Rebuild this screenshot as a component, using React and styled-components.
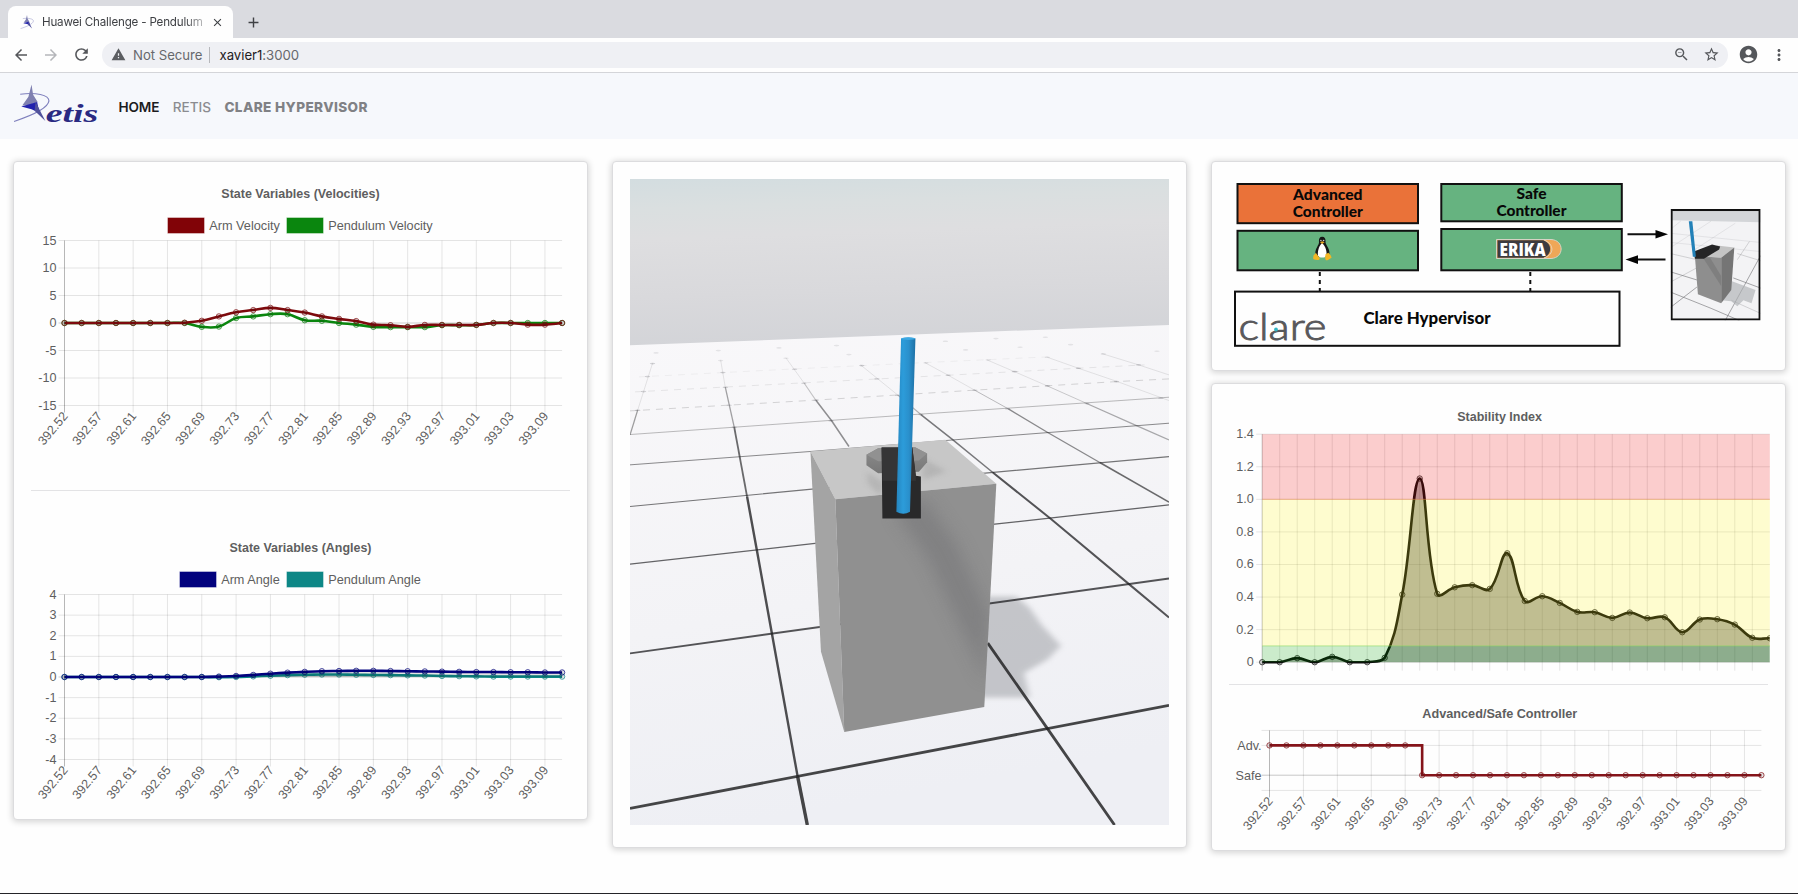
import React from "react";
import styled, { createGlobalStyle } from "styled-components";
import {
  MdArrowBack,
  MdArrowForward,
  MdRefresh,
  MdWarning,
  MdStarBorder,
  MdAccountCircle,
  MdMoreVert,
  MdOutlineZoomOut,
  MdClose,
  MdAdd,
} from "react-icons/md";

const GlobalStyle = createGlobalStyle`
  * { box-sizing: border-box; }
  html, body { margin: 0; padding: 0; background: #fefefe; }
  body { font-family: Inter, Roboto, sans-serif; overflow: hidden; }
  svg { display: block; }
`;

/* ---------- browser window ---------- */

const Window = styled.div`
  width: 1798px;
  height: 894px;
  display: flex;
  flex-direction: column;
  border-bottom: 1px solid #242428;
`;

const TabStrip = styled.div`
  height: 38px;
  flex: none;
  display: flex;
  align-items: flex-end;
  padding-left: 8px;
  background: #dadbe0;
`;

const Tab = styled.div`
  width: 225px;
  height: 32px;
  display: flex;
  align-items: center;
  padding: 0 9px 0 12px;
  border-radius: 8px 8px 0 0;
  background: #fefefe;
`;

const TabTitle = styled.div`
  flex: 1;
  margin-left: 8px;
  white-space: nowrap;
  font-size: 11.6px;
  letter-spacing: -0.18px;
  color: #3d3f43;
  mask-image: linear-gradient(90deg, #000 84%, rgba(0, 0, 0, 0.3) 96%);
`;

const TabClose = styled.div`
  color: #3f4145;
`;

const NewTab = styled.div`
  height: 32px;
  display: flex;
  align-items: center;
  margin-left: 12px;
  color: #3f4145;
`;

const Toolbar = styled.div`
  height: 35px;
  flex: none;
  display: flex;
  align-items: center;
  padding: 0 10px 1px 12px;
  background: #fefefe;
  border-bottom: 1px solid #d4d5d9;
`;

const ToolIcon = styled.div`
  width: ${(p) => p.$w || 30}px;
  display: flex;
  justify-content: ${(p) => p.$align || "flex-start"};
  color: ${(p) => p.$color || "#55575b"};
`;

const AddressBar = styled.div`
  flex: 1;
  height: 26px;
  display: flex;
  align-items: center;
  padding: 0 8px 0 9px;
  border-radius: 13px;
  background: #eff0f4;
  font-size: 13.2px;
  color: #66686c;
  letter-spacing: -0.03px;
`;

const Secure = styled.span`
  margin-left: 7px;
  padding-right: 7px;
  border-right: 1px solid #b6b7bb;
  line-height: 16px;
`;

const Url = styled.span`
  flex: 1;
  margin-left: 9px;
  b { font-weight: 400; color: #1f2023; }
`;

/* ---------- page ---------- */

const Navbar = styled.nav`
  height: 66px;
  flex: none;
  display: flex;
  align-items: center;
  padding: 1px 0 0 12px;
  background: #f6f8fc;
`;

const NavLink = styled.a`
  margin-left: ${(p) => p.$gap}px;
  font-size: 13.6px;
  font-weight: ${(p) => p.$weight};
  letter-spacing: ${(p) => p.$tracking || 0}px;
  color: ${(p) => p.$color};
`;

const Board = styled.main`
  display: grid;
  grid-template-columns: repeat(3, 575px);
  gap: 24px;
  align-items: start;
  padding: 22px 0 0 13px;
`;

const Column = styled.div`
  display: flex;
  flex-direction: column;
  gap: 12px;
`;

const Card = styled.section`
  padding: 17px 17px ${(p) => p.$bottom || 16}px;
  border: 1px solid #dcdcde;
  border-radius: 4px;
  background: #fefefe;
  box-shadow: 0 1px 6px 1px rgba(0, 0, 0, 0.16);
`;

const Rule = styled.hr`
  height: 1px;
  border: 0;
  margin: ${(p) => p.$margin || "0"};
  background: #e3e3e5;
`;

const ChartSvg = styled.svg`
  overflow: visible;
  font-family: "Liberation Sans", Arial, sans-serif;
  font-size: 12.6px;
  fill: #5e5e60;
`;

/* ---------- charts ---------- */

const TIMES = [
  "392.52", "392.57", "392.61", "392.65", "392.69", "392.73", "392.77", "392.81",
  "392.85", "392.89", "392.93", "392.97", "393.01", "393.03", "393.09",
];
const COUNT = 30;

function curve(pts, lo, hi) {
  const t = 0.4;
  const cap = (v) => Math.max(lo, Math.min(hi, v));
  const ctrl = pts.map((p, i) => {
    const a = pts[i - 1] || p;
    const c = pts[i + 1] || p;
    const d01 = Math.hypot(p[0] - a[0], p[1] - a[1]);
    const d12 = Math.hypot(c[0] - p[0], c[1] - p[1]);
    const s = d01 + d12 || 1;
    const fa = (t * d01) / s;
    const fb = (t * d12) / s;
    return {
      prev: [p[0] - fa * (c[0] - a[0]), cap(p[1] - fa * (c[1] - a[1]))],
      next: [p[0] + fb * (c[0] - a[0]), cap(p[1] + fb * (c[1] - a[1]))],
    };
  });
  let d = `M${pts[0][0]},${pts[0][1]}`;
  for (let i = 1; i < pts.length; i++) {
    d += `C${ctrl[i - 1].next} ${ctrl[i].prev} ${pts[i]}`;
  }
  return d;
}

function XLabels({ left, step, bottom }) {
  return TIMES.map((t, i) => {
    const x = left + step * i * 2;
    return (
      <text key={t} textAnchor="end" transform={`translate(${x + 4},${bottom + 11}) rotate(-50)`}>
        {t}
      </text>
    );
  });
}

function Title({ x, y, width, children }) {
  return (
    <text x={x} y={y} textAnchor="middle" fontWeight="bold" textLength={width} lengthAdjust="spacingAndGlyphs">
      {children}
    </text>
  );
}

function Series({ values, color, x, y, lo, hi, fill }) {
  const pts = values.map((v, i) => [x(i), y(v)]);
  const d = curve(pts, lo, hi);
  const zero = y(0);
  return (
    <g>
      {fill && <path d={`${d}L${pts[pts.length - 1][0]},${zero}L${pts[0][0]},${zero}Z`} fill={fill} />}
      <path d={d} fill="none" stroke={color} strokeWidth="2.6" strokeLinejoin="round" />
      {pts.map((p, i) => (
        <circle key={i} cx={p[0]} cy={p[1]} r="2.7" fill="rgba(0,0,0,.1)" stroke={color} strokeOpacity=".7" strokeWidth="1" />
      ))}
    </g>
  );
}

function StateChart({ title, titleWidth, legend, ticks, series }) {
  const left = 33.5, right = 531.1, top = 61.5, bottom = 226.5;
  const step = (right - left) / (COUNT - 1);
  const max = ticks[0];
  const x = (i) => left + i * step;
  const y = (v) => top + ((max - v) / (2 * max)) * (bottom - top);
  return (
    <ChartSvg width="539" height="270">
      <Title x={269.5} y={19.4} width={titleWidth}>{title}</Title>
      {legend.map((l) => (
        <g key={l.label}>
          <rect x={l.x} y="39" width="36" height="15" fill={l.color} stroke={l.color} strokeOpacity=".6" />
          <text x={l.x + 41.2} y="50.6" textLength={l.width} lengthAdjust="spacingAndGlyphs">{l.label}</text>
        </g>
      ))}
      {ticks.map((t) => (
        <g key={t}>
          <line x1={left - 6} x2={right} y1={y(t)} y2={y(t)} stroke="#000" strokeOpacity={t === 0 ? 0.2 : 0.1} />
          <text x={left - 8} y={y(t) + 4} textAnchor="end">{t}</text>
        </g>
      ))}
      {TIMES.map((t, i) => (
        <line key={t} x1={x(i * 2)} x2={x(i * 2)} y1={top} y2={bottom + 7} stroke="#000" strokeOpacity={i ? 0.1 : 0.28} />
      ))}
      <XLabels left={left} step={step} bottom={bottom} />
      {series.map((s) => (
        <Series key={s.color} {...s} x={x} y={y} lo={top} hi={bottom} />
      ))}
    </ChartSvg>
  );
}

const STABILITY = [
  0, 0, 0.025, 0, 0.033, 0, 0, 0.027, 0.415, 1.128, 0.42, 0.46, 0.473, 0.45, 0.669, 0.376, 0.405, 0.364,
  0.309, 0.307, 0.272, 0.305, 0.27, 0.276, 0.184, 0.262, 0.264, 0.231, 0.15, 0.147,
];

function StabilityChart() {
  const left = 33.2, right = 540.8, top = 33.2, bottom = 261.2;
  const step = (right - left) / (COUNT - 1);
  const x = (i) => left + i * step;
  const y = (v) => bottom - (v / 1.4) * (bottom - top);
  const ticks = ["1.4", "1.2", "1.0", "0.8", "0.6", "0.4", "0.2", "0"];
  return (
    <ChartSvg width="539" height="283">
      <clipPath id="stability-area"><rect x="29" y="0" width={right - 29} height="283" /></clipPath>
      <Title x={270.6} y={20.4} width={84.7}>Stability Index</Title>
      {ticks.map((t) => (
        <g key={t}>
          <line x1={left - 6} x2={right} y1={y(+t)} y2={y(+t)} stroke="#000" strokeOpacity=".1" />
          <text x={left - 8.4} y={y(+t) + 4} textAnchor="end">{t}</text>
        </g>
      ))}
      {STABILITY.slice(0, 29).map((_, i) => (
        <line key={i} x1={x(i)} x2={x(i)} y1={top} y2={bottom + 8.5} stroke="#000" strokeOpacity={i ? 0.1 : 0.25} />
      ))}
      <g clipPath="url(#stability-area)">
        <Series values={STABILITY} color="#0c0c0c" fill="rgba(0,0,0,.3)" x={x} y={y} lo={top} hi={bottom} />
      </g>
      <rect x={left} y={top} width={right - left} height={y(1) - top} fill="rgba(238,10,10,.2)" />
      <rect x={left} y={y(1)} width={right - left} height={y(0.1) - y(1)} fill="rgba(255,245,20,.2)" />
      <rect x={left} y={y(0.1)} width={right - left} height={bottom - y(0.1)} fill="rgba(0,160,0,.2)" />
      <line x1={left} x2={right} y1={y(1)} y2={y(1)} stroke="#f08a50" strokeOpacity=".5" />
      <line x1={left} x2={right} y1={y(0.1)} y2={y(0.1)} stroke="#86dc5a" strokeOpacity=".55" />
    </ChartSvg>
  );
}

function ModeChart() {
  const left = 40.5, right = 532.4, top = 45.4, bottom = 105.4;
  const adv = 60.4, safe = 90.2;
  const step = (right - left) / (COUNT - 1);
  const x = (i) => left + i * step;
  return (
    <ChartSvg width="539" height="148">
      <Title x={270.8} y={33} width={155}>Advanced/Safe Controller</Title>
      {[top, adv, safe, bottom].map((v) => (
        <line key={v} x1={left - 8} x2={right} y1={v} y2={v} stroke="#000" strokeOpacity={v === safe ? 0.22 : 0.1} />
      ))}
      {TIMES.map((t, i) => (
        <line key={t} x1={x(i * 2)} x2={x(i * 2)} y1={top} y2={bottom + 7} stroke="#000" strokeOpacity={i ? 0.1 : 0.28} />
      ))}
      <text x={left - 8} y={adv + 4.2} textAnchor="end">Adv.</text>
      <text x={left - 8} y={safe + 4.5} textAnchor="end">Safe</text>
      <XLabels left={left} step={step} bottom={bottom} />
      <path d={`M${left},${adv}H${x(9)}V${safe}H${right}`} fill="none" stroke="#85141a" strokeWidth="2.6" />
      {STABILITY.map((_, i) => (
        <circle key={i} cx={x(i)} cy={i < 9 ? adv : safe} r="2.7" fill="rgba(0,0,0,.1)" stroke="#85141a" strokeOpacity=".75" />
      ))}
    </ChartSvg>
  );
}

/* ---------- simulation view ---------- */

const SceneSvg = styled.svg`
  width: 539px;
  height: 646px;
  path, polyline { vector-effect: non-scaling-stroke; }
`;

const ROWS = [
  ["77,1976 1463,1667", 2.8, 0.82],
  ["77,1511 1463,1286", 1.9, 0.75],
  ["77,1243 553,1181 1015,1123 1463,1065", 1.3, 0.68],
  ["77,1070 545,1018 990,970 1463,920", 1.2, 0.6],
  ["77,945 540,905 910,870 1463,820", 1, 0.5],
  ["77,854 345,832 770,797 1463,742", 0.9, 0.32],
];
const FADED_ROWS = [
  ["77,783 550,751 960,721 1330,695 1463,687", 0.17],
  ["90,726 520,699 895,676 1230,655 1400,645", 0.09],
  ["100,681 500,657 835,638 1150,621", 0.05],
];
const DEPTH = [
  ["322,712 345,832", 1.3, 0.4],
  ["345,832 378,1040", 1.8, 0.65],
  ["378,1040 403,1200 442,1452 508,1880", 2.4, 0.78],
  ["508,1880 533,2026", 3.4, 0.82],
  ["97,780 77,855", 1.3, 0.42],
  ["525,700 555,751", 1.1, 0.25],
  ["555,751 595,812 640,890", 1.5, 0.48],
  ["765,735 825,794", 1.1, 0.32],
  ["825,794 905,868 1010,968", 1.5, 0.58],
  ["1010,968 1158,1106 1357,1300 1463,1403", 2, 0.75],
  ["962,720 1050,777", 1, 0.28],
  ["1050,777 1150,847 1285,938", 1.3, 0.5],
  ["1285,938 1463,1057", 1.6, 0.65],
  ["1150,708 1250,760", 1, 0.22],
  ["1250,760 1375,825 1463,870", 1.2, 0.36],
  ["997,1480 1150,1736 1323,2026", 2.8, 0.82],
];
const FADED_DEPTH = [
  "135,640 97,780", "310,630 322,712", "478,624 525,700", "670,645 765,735",
  "835,638 895,676 962,720", "995,630 1065,665 1150,708", "1150,622 1230,655 1330,695 1463,752", "1290,611 1385,645 1463,675",
];
const DOTS = [
  [144, 609], [304, 602], [460, 594], [608, 587], [888, 574], [1018, 566], [1145, 562], [135, 641], [310, 632],
  [478, 625], [640, 614], [940, 600], [1080, 592], [1210, 584], [122, 680], [316, 668], [500, 658], [673, 647],
  [838, 639], [998, 630], [1150, 622], [1294, 612], [1432, 604], [112, 725], [322, 712], [524, 700], [712, 687],
  [895, 676], [1066, 665], [1230, 655], [1385, 645], [97, 781], [332, 766], [555, 751], [765, 736], [964, 721],
  [1150, 708], [1328, 695], [345, 832], [594, 813], [825, 794], [1048, 777], [1252, 761], [1442, 745],
];

function Scene() {
  return (
    <SceneSvg viewBox="77 87 1386 1939" preserveAspectRatio="none">
      <defs>
        <linearGradient id="sky" x1="0" y1="0" x2="0.12" y2="1">
          <stop offset="0" stopColor="#d3dde0" />
          <stop offset="0.18" stopColor="#dadfe0" />
          <stop offset="0.36" stopColor="#dedee0" />
          <stop offset="0.7" stopColor="#d9d9dc" />
          <stop offset="1" stopColor="#d3d4d8" />
        </linearGradient>
        <linearGradient id="floor" x1="0" y1="0" x2="0.2" y2="1">
          <stop offset="0" stopColor="#f9f8fa" />
          <stop offset="0.6" stopColor="#f3f3f6" />
          <stop offset="1" stopColor="#eeeff4" />
        </linearGradient>
        <linearGradient id="rod" x1="0" y1="0" x2="1" y2="0">
          <stop offset="0" stopColor="#2585bf" />
          <stop offset="0.35" stopColor="#2c9cda" />
          <stop offset="0.65" stopColor="#2a90cc" />
          <stop offset="1" stopColor="#1e70a5" />
        </linearGradient>
        <linearGradient id="hub" x1="0" y1="0" x2="0" y2="1">
          <stop offset="0" stopColor="#8c8c8c" />
          <stop offset="1" stopColor="#777" />
        </linearGradient>
        <filter id="soft" x="-20%" y="-20%" width="140%" height="140%"><feGaussianBlur stdDeviation="8" /></filter>
        <filter id="softer" x="-30%" y="-30%" width="160%" height="160%"><feGaussianBlur stdDeviation="22" /></filter>
        <clipPath id="front"><path d="M605,1048 1019,1002 988,1672 628,1747Z" /></clipPath>
        <clipPath id="top"><path d="M541,905 888,870 1019,1002 605,1048Z" /></clipPath>
      </defs>
      <path d="M77,87H1463V530L77,590Z" fill="url(#sky)" />
      <path d="M77,586 1463,525V2026H77Z" fill="url(#floor)" />
      <path d="M960,1340H1070L1105,1375 1135,1425 1185,1488 1150,1530 1090,1570 1105,1643H970Z" fill="#9fa1a6" opacity=".55" filter="url(#soft)" />
      <g fill="none" stroke="#1e1e20">
        {ROWS.map(([p, w, o]) => <polyline key={p} points={p} strokeWidth={w} strokeOpacity={o} />)}
        {FADED_ROWS.map(([p, o]) => <polyline key={p} points={p} strokeOpacity={o} strokeDasharray="7 6" />)}
        {DEPTH.map(([p, w, o]) => <polyline key={p} points={p} strokeWidth={w} strokeOpacity={o} />)}
        {FADED_DEPTH.map((p) => <polyline key={p} points={p} strokeOpacity=".1" />)}
      </g>
      {DOTS.map(([a, b]) => <ellipse key={`${a}-${b}`} cx={a} cy={b} rx="7" ry="2.5" fill="#55555a" opacity={b < 640 ? 0.12 : 0.24} />)}
      <path d="M541,905 888,870 1019,1002 605,1048Z" fill="#c7c7c7" />
      <path d="M541,905 605,1048 628,1747 568,1505Z" fill="#a4a4a4" />
      <path d="M605,1048 1019,1002 988,1672 628,1747Z" fill="#909090" />
      <g clipPath="url(#front)">
        <path d="M760,1090 830,1040 915,1180 1000,1390 995,1600 930,1440 840,1220Z" fill="#757577" opacity=".55" filter="url(#softer)" />
      </g>
      <g clipPath="url(#top)">
        <path d="M830,925 890,965 830,990ZM685,965 730,1000 722,1040 690,1000Z" fill="#a2a2a2" opacity=".5" filter="url(#soft)" />
      </g>
      <path d="M685,915 715,895 810,892 841,911V937L820,966 715,970 685,946Z" fill="url(#hub)" />
      <path d="M685,915 715,895 810,892 841,911 820,932 715,934Z" fill="#919191" />
      <path d="M724,893H803L812,978 825,980V1106H726Z" fill="#29292a" />
      <path d="M724,893H803L812,978 812,993H726Z" fill="#353536" />
      <path d="M774,566Q792,559 811,566L797,1086Q780,1098 762,1086Z" fill="url(#rod)" />
      <ellipse cx="792.5" cy="566" rx="18.5" ry="4" fill="#3da9e3" />
    </SceneSvg>
  );
}

/* ---------- architecture diagram ---------- */

const DiagramSvg = styled.svg`
  overflow: visible;
  font-family: Lato, sans-serif;
  font-size: 15.8px;
  font-weight: 900;
`;

function Diagram() {
  return (
    <DiagramSvg width="539" height="175">
      <g stroke="#111" strokeWidth="2">
        <rect x="8.5" y="5" width="180.5" height="39.2" fill="#ea7239" />
        <rect x="212.3" y="5" width="180.5" height="37.3" fill="#66b380" />
        <rect x="8.5" y="51.8" width="180.5" height="39.5" fill="#66b380" />
        <rect x="212.3" y="50" width="180.5" height="41.3" fill="#66b380" />
        <rect x="6" y="112.6" width="384.5" height="54.2" fill="#fefefe" />
        <path d="M90.8,93V112M301.3,93V112" strokeDasharray="4 4" />
        <path d="M398.5,55.3H430M406,80.6H436.5" />
      </g>
      <path d="M439,55.3 426.5,51V59.6ZM396.5,80.6 409,76.3V84.9Z" fill="#050505" />
      <g textAnchor="middle" fill="#080808">
        <text x="98.8" y="21.4" textLength="69.5" lengthAdjust="spacingAndGlyphs">Advanced</text>
        <text x="98.8" y="37.6" textLength="70" lengthAdjust="spacingAndGlyphs">Controller</text>
        <text x="302.5" y="20.4" textLength="30" lengthAdjust="spacingAndGlyphs">Safe</text>
        <text x="302.5" y="36.5" textLength="70" lengthAdjust="spacingAndGlyphs">Controller</text>
        <text x="198" y="145" fontSize="17.4" textLength="127" lengthAdjust="spacingAndGlyphs">Clare Hypervisor</text>
      </g>
      {/* penguin */}
      <g transform="translate(84,57.7)">
        <path d="M9.2,0C6.3,0 5.7,2.3 6,5.5C6,8.2 2.4,11.5 2.3,16.5L3,20H16L16.4,16.5C16.8,12 12.6,8 12.5,5.5C12.8,2.3 12,0 9.2,0Z" fill="#161616" />
        <path d="M9,6.5C6.3,8.5 4.3,14 5,19C6.5,21.5 12,21.5 13.4,19C14.2,14 12,8.5 9,6.5Z" fill="#fff" />
        <circle cx="7.9" cy="3.8" r=".8" fill="#ccc" /><circle cx="10.6" cy="3.8" r=".8" fill="#ccc" />
        <path d="M7,5.6 9.2,4.5 11.6,5.6 9.2,7.3Z" fill="#e8a722" />
        <path d="M2.8,16 6.8,21.5C6.4,24.2 3,23.5 .6,22.5C-.4,21.5 .5,20 .6,18.5C1,17.5 2,18 2.8,16ZM15.4,16 17.8,18.8 18.6,21 14.5,23.5C12.2,24.2 11.8,22 12.5,17.5Z" fill="#f2b624" />
      </g>
      {/* ERIKA badge */}
      <path d="M267.5,60.5H322C335.5,61 335.5,79 322,79.5H267.5Z" fill="#efa757" stroke="#d6d3c5" />
      <path d="M268.5,61.3H314C323.5,64 323.5,76.2 314,78.8H268.5Z" fill="#3c3b3f" />
      <path d="M315,61C325.5,65 325.5,75.5 315,79" fill="none" stroke="#e8e0d0" strokeWidth=".8" />
      <text x="270.6" y="76.6" fontFamily="'Open Sans', sans-serif" fontSize="18" fontWeight="800" fill="#fff" textLength="46" lengthAdjust="spacingAndGlyphs">ERIKA</text>
      {/* hypervisor wordmark */}
      <text x="9.5" y="161" fontSize="38" fontWeight="300" fill="#58585b" stroke="#58585b" strokeWidth=".9" textLength="88" lengthAdjust="spacingAndGlyphs">clare</text>
      <circle cx="47" cy="150.5" r="1.9" fill="#35b5c4" />
      {/* plant thumbnail */}
      <svg x="441.6" y="30" width="90" height="111.5" viewBox="0 0 89 110" preserveAspectRatio="none">
        <rect width="89" height="110" fill="#f3f3f5" />
        <path d="M0,0H89V13L0,11Z" fill="#d3d5d8" />
        <g stroke="#77777b" strokeWidth=".8" fill="none">
          <path d="M0,97 26,77M0,82 40,98 68,110M54,110 89,46M0,62 26,70M62,68 89,78" opacity=".8" />
          <path d="M0,72 26,58M60,90 89,103M0,44 26,50M66,44 89,51M78,32 66,50" opacity=".35" />
          <path d="M0,24 89,33M0,33 89,42M10,12 0,20M40,12 0,38M64,14 24,40" opacity=".16" />
        </g>
        <path d="M60,71 84,80 80,93 72,90 66,96 60,91 50,90Z" fill="#aeb0b4" opacity=".65" />
        <path d="M24,46 46,36 63,38 50,48Z" fill="#c4c4c4" />
        <path d="M24,46 50,48V93L27,84Z" fill="#8e8e8e" />
        <path d="M50,48 63,38 60,80 50,93Z" fill="#757575" />
        <path d="M32,48 39,48 50,66V76Z" fill="#7f7f7f" />
        <path d="M23,42 41,35 49,37 48,40 33,49 24,49Z" fill="#252526" />
        <path d="M18,12H21.5L25,47H22Z" fill="#2381b8" />
        <rect x="1" y="1" width="87" height="108" fill="none" stroke="#111" strokeWidth="2" />
      </svg>
    </DiagramSvg>
  );
}

/* ---------- brand mark ---------- */

function Star({ size }) {
  return (
    <svg width={size} height={size} viewBox="0 0 36 37">
      <path d="M7,9.5C22,7.5 35,10 35,16C34,24 16,31 1,36" fill="none" stroke="#7f80bd" strokeWidth="1.1" />
      <path d="M18,0 19.6,10 24,17 16,20 9,20.5 15,12Z" fill="#7f80b0" />
      <path d="M8,21.5 23.5,17 24.5,22 26.5,28 18,24Z" fill="#2222ad" />
      <path d="M22,17 31.5,35.5 21,25.5Z" fill="#51529c" />
    </svg>
  );
}

function Brand() {
  return (
    <svg width="88" height="46" viewBox="0 0 88 46">
      <g transform="translate(0.5,0.5)"><Star size={38} /></g>
      <text x="33.8" y="37.6" fontFamily="'Liberation Serif', serif" fontStyle="italic" fontWeight="700" fontSize="24.5" fill="#2a2a82" textLength="52.5" lengthAdjust="spacingAndGlyphs">etis</text>
    </svg>
  );
}

const rep = (v, n) => Array(n).fill(v);

const ARM_VEL = [...rep(0, 7), 0.05, 0.4, 1.2, 1.95, 2.35, 2.75, 2.35, 1.9, 1.2, 0.75, 0.35, -0.3, -0.4, -0.7, -0.35, -0.35, -0.35, -0.35, 0, 0, -0.3, -0.3, 0];
const PEND_VEL = [...rep(0, 8), -0.7, -0.65, 0.9, 1.2, 1.6, 1.6, 0.5, 0.4, 0, -0.3, -0.7, -0.75, -0.75, -0.75, -0.4, -0.4, -0.35, 0, 0, 0, 0, 0];
const ARM_ANG = [...rep(0, 9), 0.02, 0.05, 0.1, 0.16, 0.21, 0.25, 0.28, 0.29, 0.3, 0.3, 0.29, 0.28, 0.27, 0.26, 0.25, 0.24, 0.24, 0.23, 0.23, 0.22, 0.22];
const PEND_ANG = [...rep(0, 9), -0.01, 0, 0.03, 0.06, 0.09, 0.11, 0.12, 0.12, 0.11, 0.1, 0.09, 0.08, 0.07, 0.05, 0.04, 0.03, 0.02, 0.02, 0.02, 0.02, 0.02];

export default function App() {
  return (
    <>
      <GlobalStyle />
      <Window>
        <TabStrip>
          <Tab>
            <Star size={14} />
            <TabTitle>Huawei Challenge - Pendulum</TabTitle>
            <TabClose><MdClose size={13} /></TabClose>
          </Tab>
          <NewTab><MdAdd size={17} /></NewTab>
        </TabStrip>
        <Toolbar>
          <ToolIcon><MdArrowBack size={18} /></ToolIcon>
          <ToolIcon $color="#b5b6ba"><MdArrowForward size={18} /></ToolIcon>
          <ToolIcon><MdRefresh size={19} /></ToolIcon>
          <AddressBar>
            <MdWarning size={15} color="#5b5d61" />
            <Secure>Not Secure</Secure>
            <Url><b>xavier1</b>:3000</Url>
            <ToolIcon><MdOutlineZoomOut size={17} /></ToolIcon>
            <ToolIcon $w={17}><MdStarBorder size={17} /></ToolIcon>
          </AddressBar>
          <ToolIcon $w={41} $align="center"><MdAccountCircle size={21} /></ToolIcon>
          <ToolIcon $w={19} $align="center"><MdMoreVert size={18} /></ToolIcon>
        </Toolbar>
        <Navbar>
          <Brand />
          <NavLink $gap={18.5} $weight={600} $tracking={-0.15} $color="#1c1c1e">HOME</NavLink>
          <NavLink $gap={13.5} $weight={500} $tracking={-0.05} $color="#8b8c90">RETIS</NavLink>
          <NavLink $gap={13.5} $weight={800} $tracking={0.36} $color="#808185">CLARE HYPERVISOR</NavLink>
        </Navbar>
        <Board>
          <Card>
            <StateChart
              title="State Variables (Velocities)"
              titleWidth={158.4}
              legend={[
                { label: "Arm Velocity", x: 137, width: 70.8, color: "#810307" },
                { label: "Pendulum Velocity", x: 256, width: 104.5, color: "#0a860e" },
              ]}
              ticks={[15, 10, 5, 0, -5, -10, -15]}
              series={[
                { values: PEND_VEL, color: "#0a860e" },
                { values: ARM_VEL, color: "#7d0a0d" },
              ]}
            />
            <Rule $margin="41px 0 42px" />
            <StateChart
              title="State Variables (Angles)"
              titleWidth={142}
              legend={[
                { label: "Arm Angle", x: 149, width: 58.5, color: "#02027e" },
                { label: "Pendulum Angle", x: 256, width: 92.6, color: "#0d8786" },
              ]}
              ticks={[4, 3, 2, 1, 0, -1, -2, -3, -4]}
              series={[
                { values: PEND_ANG, color: "#0d8786", fill: "rgba(0,0,0,.1)" },
                { values: ARM_ANG, color: "#02027e", fill: "rgba(0,0,0,.1)" },
              ]}
            />
          </Card>
          <Card $bottom={22}>
            <Scene />
          </Card>
          <Column>
            <Card>
              <Diagram />
            </Card>
            <Card $bottom={17}>
              <StabilityChart />
              <Rule />
              <ModeChart />
            </Card>
          </Column>
        </Board>
      </Window>
    </>
  );
}
